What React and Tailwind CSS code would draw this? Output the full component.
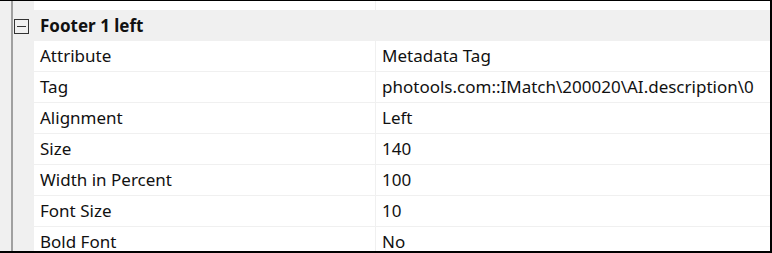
const ROWS = [
  ['Attribute', 'Metadata Tag'],
  ['Tag', 'photools.com::IMatch\\200020\\AI.description\\0'],
  ['Alignment', 'Left'],
  ['Size', '140'],
  ['Width in Percent', '100'],
  ['Font Size', '10'],
  ['Bold Font', 'No'],
];

function Row({ name, value }) {
  return (
    <div className="flex h-[31px] shrink-0">
      {/* gutter */}
      <div className="w-[21px] shrink-0 bg-[#f0f0f0]" />
      <div className="flex-1 flex bg-white border-b border-[#f0f0f0]">
        <div className="w-[342px] shrink-0 border-r border-[#f0f0f0] pl-[6px] flex items-center">
          {name}
        </div>
        <div className="flex-1 pl-[6px] flex items-center whitespace-nowrap">{value}</div>
      </div>
    </div>
  );
}

export default function App() {
  return (
    <div
      className="w-[772px] h-[253px] flex overflow-hidden bg-[#f0f0f0] border-t border-r-2 border-b-2 border-black text-[17px] text-[#111]"
      style={{ fontFamily: '"Noto Sans", "Open Sans", sans-serif' }}
    >
      <div className="w-[11px] shrink-0" />
      <div className="w-[2px] shrink-0 bg-[#a0a0a0]" />
      <div className="flex-1 flex flex-col min-w-0">
        {/* partial row above */}
        <div className="flex h-[9px] shrink-0">
          <div className="w-[21px] shrink-0" />
          <div className="flex-1 flex bg-white">
            <div className="w-[342px] shrink-0 border-r border-[#f0f0f0]" />
          </div>
        </div>
        {/* group header */}
        <div className="flex items-center h-[31px] shrink-0 bg-[#f0f0f0] border-t border-[#f0f0f0]">
          <div className="ml-[1px] w-[15px] h-[15px] border border-[#333] flex items-center justify-center">
            <div className="w-[9px] h-[1px] bg-[#333]" />
          </div>
          <span className="ml-[11px] font-bold">Footer 1 left</span>
        </div>
        {ROWS.map(([n, v]) => (
          <Row key={n} name={n} value={v} />
        ))}
      </div>
    </div>
  );
}
